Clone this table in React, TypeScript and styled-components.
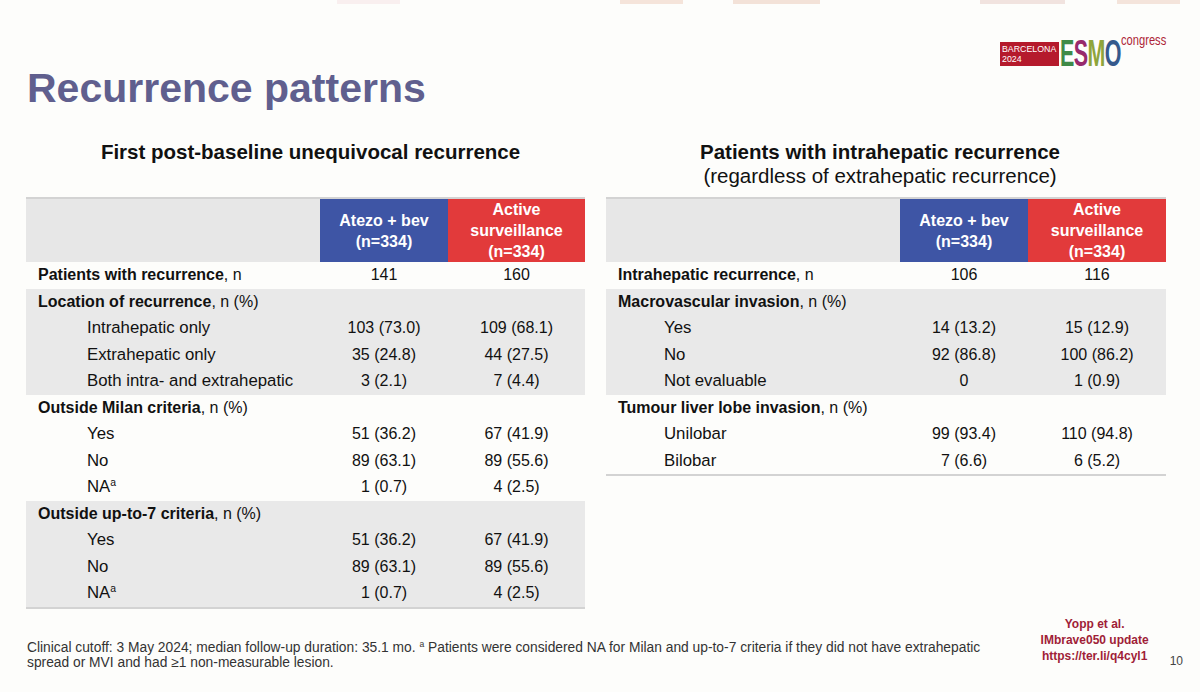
import React from "react";
import styled, { createGlobalStyle } from "styled-components";

const GlobalStyle = createGlobalStyle`
  * { box-sizing: border-box; }
  body {
    margin: 0;
    background: #fdfdfb;
    font-family: "Liberation Sans", Arial, sans-serif;
  }
`;

// styled-components

const Page = styled.div`
  width: 1200px;
  height: 692px;
  background: #fdfdfb;
  display: flex;
  flex-direction: column;
  overflow: hidden;
  color: #111;
  font-family: "Liberation Sans", Arial, sans-serif;
`;

const TopStrip = styled.div`
  display: flex;
  height: 4px;
`;

const StripBar = styled.div<{ $gap: number; $w: number; $c: string }>`
  margin-left: ${(p) => p.$gap}px;
  width: ${(p) => p.$w}px;
  background: ${(p) => p.$c};
`;

const Header = styled.div`
  height: 136px;
  display: flex;
  justify-content: space-between;
  align-items: flex-start;
  padding: 0 34px 0 27px;
`;

const Title = styled.h1`
  margin: 64px 0 0;
  font-size: 41px;
  line-height: 1;
  font-weight: 700;
  color: #605f8e;
`;

const Logo = styled.div`
  margin-top: 29px;
  display: flex;
  align-items: flex-end;
  height: 34px;

  & > * {
    flex-shrink: 0;
  }
`;

const CityBox = styled.div`
  width: 59px;
  height: 24px;
  margin-bottom: 1px;
  background: #b51a2c;
  color: #fff;
  font-size: 8.8px;
  line-height: 10px;
  padding: 2px 0 0 2px;
  overflow: hidden;
  white-space: nowrap;
`;

const EsmoWord = styled.div`
  width: 61px;
  height: 27px;
  margin-left: 1px;
`;

const EsmoInner = styled.div`
  display: flex;
  font-size: 37px;
  font-weight: 700;
  line-height: 27px;
  height: 27px;
  transform: scaleX(0.58);
  transform-origin: left bottom;
  white-space: nowrap;
  letter-spacing: -1px;
`;

const EsmoLetter = styled.span<{ $c: string }>`
  color: ${(p) => p.$c};
`;

const Congress = styled.div`
  align-self: flex-start;
  font-size: 15.5px;
  line-height: 14px;
  color: #ad1f37;
  width: 45px;
  white-space: nowrap;
  transform: scaleX(0.72);
  transform-origin: left top;
`;

const Columns = styled.div`
  display: grid;
  grid-template-columns: 559px 560px;
  column-gap: 21px;
  padding-left: 26px;
`;

const Panel = styled.div`
  display: flex;
  flex-direction: column;
`;

const Caption = styled.div<{ $nudge: number }>`
  height: 57px;
  text-align: center;
  font-size: 20.5px;
  line-height: 24px;
  padding-left: ${(p) => (p.$nudge > 0 ? p.$nudge : 0)}px;
  padding-right: ${(p) => (p.$nudge < 0 ? -p.$nudge : 0)}px;
  white-space: nowrap;
`;

const CaptionMain = styled.div`
  font-weight: 700;
`;

const CaptionSub = styled.div`
  font-weight: 400;
`;

const Table = styled.div`
  border-top: 2px solid #d3d3d3;
  border-bottom: 2px solid #d3d3d3;
`;

const HeadRow = styled.div`
  display: grid;
  grid-template-columns: 294px 128px 1fr;
  height: 63px;
  background: #e7e7e7;
`;

const HeadCell = styled.div<{ $tone: "blue" | "red" }>`
  display: flex;
  align-items: center;
  justify-content: center;
  text-align: center;
  background: ${(p) => (p.$tone === "blue" ? "#3e55a5" : "#e23a3b")};
  color: #fff;
  font-size: 16px;
  font-weight: 700;
  line-height: 21px;
`;

const Group = styled.div<{ $shade?: boolean }>`
  background: ${(p) => (p.$shade ? "#e9e9e9" : "transparent")};
`;

const Row = styled.div`
  display: grid;
  grid-template-columns: 294px 128px 1fr;
  height: 26.5px;
  align-items: center;
  font-size: 16px;
`;

const Label = styled.div<{ $indent: number; $sub?: boolean }>`
  padding-left: ${(p) => p.$indent}px;
  font-size: ${(p) => (p.$sub ? 16.8 : 16)}px;
  white-space: nowrap;
`;

const Strong = styled.span`
  font-weight: 700;
`;

const Value = styled.div`
  text-align: center;
`;

const Sup = styled.sup`
  font-size: 0.62em;
  line-height: 0;
  vertical-align: 0.55em;
`;

const Footer = styled.div`
  margin-top: auto;
  display: flex;
  align-items: flex-end;
  padding: 0 17px 22px 27px;
`;

const FootNote = styled.div`
  flex: 1;
  font-size: 13.8px;
  line-height: 15px;
  color: #333;
  white-space: nowrap;
`;

const RefBlock = styled.div`
  width: 140px;
  margin-bottom: 6px;
  text-align: center;
  font-size: 12px;
  font-weight: 700;
  line-height: 16px;
  color: #a01e37;
`;

const PageNum = styled.div`
  margin-left: 5px;
  margin-bottom: 2px;
  font-size: 12px;
  color: #444;
`;

type Line = { label: React.ReactNode; a?: React.ReactNode; b?: React.ReactNode; sub?: boolean };
type Block = { shade?: boolean; rows: Line[] };

const na = (
  <>
    NA<Sup>a</Sup>
  </>
);

const leftBlocks: Block[] = [
  {
    rows: [{ label: <><Strong>Patients with recurrence</Strong>, n</>, a: "141", b: "160" }],
  },
  {
    shade: true,
    rows: [
      { label: <><Strong>Location of recurrence</Strong>, n (%)</> },
      { label: "Intrahepatic only", a: "103 (73.0)", b: "109 (68.1)", sub: true },
      { label: "Extrahepatic only", a: "35 (24.8)", b: "44 (27.5)", sub: true },
      { label: "Both intra- and extrahepatic", a: "3 (2.1)", b: "7 (4.4)", sub: true },
    ],
  },
  {
    rows: [
      { label: <><Strong>Outside Milan criteria</Strong>, n (%)</> },
      { label: "Yes", a: "51 (36.2)", b: "67 (41.9)", sub: true },
      { label: "No", a: "89 (63.1)", b: "89 (55.6)", sub: true },
      { label: na, a: "1 (0.7)", b: "4 (2.5)", sub: true },
    ],
  },
  {
    shade: true,
    rows: [
      { label: <><Strong>Outside up-to-7 criteria</Strong>, n (%)</> },
      { label: "Yes", a: "51 (36.2)", b: "67 (41.9)", sub: true },
      { label: "No", a: "89 (63.1)", b: "89 (55.6)", sub: true },
      { label: na, a: "1 (0.7)", b: "4 (2.5)", sub: true },
    ],
  },
];

const rightBlocks: Block[] = [
  {
    rows: [{ label: <><Strong>Intrahepatic recurrence</Strong>, n</>, a: "106", b: "116" }],
  },
  {
    shade: true,
    rows: [
      { label: <><Strong>Macrovascular invasion</Strong>, n (%)</> },
      { label: "Yes", a: "14 (13.2)", b: "15 (12.9)", sub: true },
      { label: "No", a: "92 (86.8)", b: "100 (86.2)", sub: true },
      { label: "Not evaluable", a: "0", b: "1 (0.9)", sub: true },
    ],
  },
  {
    rows: [
      { label: <><Strong>Tumour liver lobe invasion</Strong>, n (%)</> },
      { label: "Unilobar", a: "99 (93.4)", b: "110 (94.8)", sub: true },
      { label: "Bilobar", a: "7 (6.6)", b: "6 (5.2)", sub: true },
    ],
  },
];

const strip = [
  { gap: 337, w: 63, c: "#f9efef" },
  { gap: 220, w: 63, c: "#f5e4da" },
  { gap: 50, w: 87, c: "#f3e2d8" },
  { gap: 160, w: 85, c: "#f1e3df" },
  { gap: 52, w: 63, c: "#f4e4db" },
];

function DataTable({ blocks, subIndent }: { blocks: Block[]; subIndent: number }) {
  return (
    <Table>
      <HeadRow>
        <div />
        <HeadCell $tone="blue">
          Atezo + bev
          <br />
          (n=334)
        </HeadCell>
        <HeadCell $tone="red">
          Active
          <br />
          surveillance
          <br />
          (n=334)
        </HeadCell>
      </HeadRow>
      {blocks.map((block, i) => (
        <Group key={i} $shade={block.shade}>
          {block.rows.map((row, j) => (
            <Row key={j}>
              <Label $indent={row.sub ? subIndent : 12} $sub={row.sub}>
                {row.label}
              </Label>
              <Value>{row.a}</Value>
              <Value>{row.b}</Value>
            </Row>
          ))}
        </Group>
      ))}
    </Table>
  );
}

export default function App() {
  return (
    <>
      <GlobalStyle />
      <Page>
        <TopStrip>
          {strip.map((s, i) => (
            <StripBar key={i} $gap={s.gap} $w={s.w} $c={s.c} />
          ))}
        </TopStrip>
        <Header>
          <Title>Recurrence patterns</Title>
          <Logo>
            <CityBox>
              BARCELONA
              <br />
              2024
            </CityBox>
            <EsmoWord>
              <EsmoInner>
                <EsmoLetter $c="#3f8a47">E</EsmoLetter>
                <EsmoLetter $c="#972a6c">S</EsmoLetter>
                <EsmoLetter $c="#8fa53a">M</EsmoLetter>
                <EsmoLetter $c="#35598c">O</EsmoLetter>
              </EsmoInner>
            </EsmoWord>
            <Congress>congress</Congress>
          </Logo>
        </Header>
        <Columns>
          <Panel>
            <Caption $nudge={10}>
              <CaptionMain>First post-baseline unequivocal recurrence</CaptionMain>
            </Caption>
            <DataTable blocks={leftBlocks} subIndent={61} />
          </Panel>
          <Panel>
            <Caption $nudge={-12}>
              <CaptionMain>Patients with intrahepatic recurrence</CaptionMain>
              <CaptionSub>(regardless of extrahepatic recurrence)</CaptionSub>
            </Caption>
            <DataTable blocks={rightBlocks} subIndent={58} />
          </Panel>
        </Columns>
        <Footer>
          <FootNote>
            Clinical cutoff: 3 May 2024; median follow-up duration: 35.1 mo. <Sup>a</Sup> Patients were
            considered NA for Milan and up-to-7 criteria if they did not have extrahepatic
            <br />
            spread or MVI and had ≥1 non-measurable lesion.
          </FootNote>
          <RefBlock>
            Yopp et al.
            <br />
            IMbrave050 update
            <br />
            https://ter.li/q4cyl1
          </RefBlock>
          <PageNum>10</PageNum>
        </Footer>
      </Page>
    </>
  );
}
